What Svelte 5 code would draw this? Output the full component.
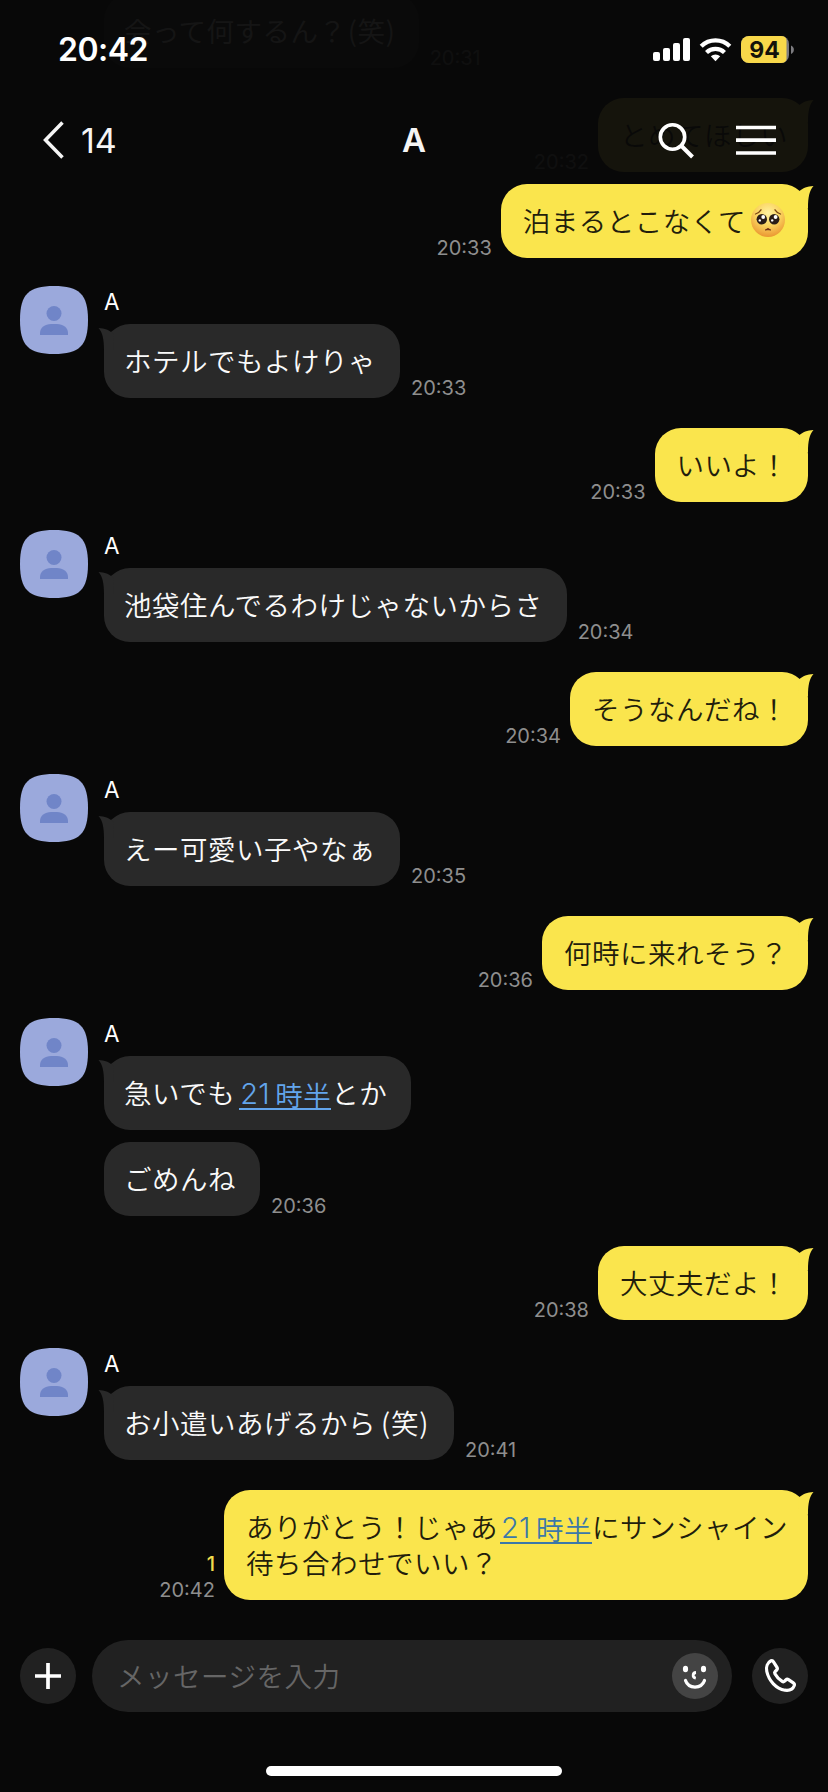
<script>
  const messages = [
    { from: 'them', cont: true, time: '20:31', lines: [[{ t: '会って何するん？' }, { t: '(笑)', kind: 'laugh tight' }]] },
    { from: 'me', time: '20:32', lines: [[{ t: 'とめてほしい' }]] },
    { from: 'me', cont: true, tail: true, time: '20:33', lines: [[{ t: '泊まるとこなくて' }, { kind: 'emoji' }]] },
    { from: 'them', time: '20:33', lines: [[{ t: 'ホテルでもよけりゃ' }]] },
    { from: 'me', time: '20:33', lines: [[{ t: 'いいよ！' }]] },
    { from: 'them', time: '20:34', lines: [[{ t: '池袋住んでるわけじゃないからさ' }]] },
    { from: 'me', time: '20:34', lines: [[{ t: 'そうなんだね！' }]] },
    { from: 'them', time: '20:35', lines: [[{ t: 'えー可愛い子やなぁ' }]] },
    { from: 'me', time: '20:36', lines: [[{ t: '何時に来れそう？' }]] },
    { from: 'them', lines: [[{ t: '急いでも' }, { n: '21', t: '時半', kind: 'link' }, { t: 'とか' }]] },
    { from: 'them', cont: true, time: '20:36', lines: [[{ t: 'ごめんね' }]] },
    { from: 'me', time: '20:38', lines: [[{ t: '大丈夫だよ！' }]] },
    { from: 'them', time: '20:41', lines: [[{ t: 'お小遣いあげるから' }, { t: '(笑)', kind: 'laugh' }]] },
    {
      from: 'me', time: '20:42', read: '1',
      lines: [
        [{ t: 'ありがとう！じゃあ' }, { n: '21', t: '時半', kind: 'link' }, { t: 'にサンシャイン' }],
        [{ t: '待ち合わせでいい？' }]
      ]
    }
  ];
</script>

{#snippet emoji()}
  <svg class="emoji" viewBox="0 0 34 34" role="img" aria-label="🥺">
    <defs>
      <radialGradient id="face" cx=".5" cy=".3" r=".72">
        <stop offset="0" stop-color="#fff1a0" />
        <stop offset=".5" stop-color="#fbd45f" />
        <stop offset="1" stop-color="#e9932f" />
      </radialGradient>
    </defs>
    <circle cx="17" cy="17" r="17" fill="url(#face)" />
    <circle cx="10.8" cy="16.2" r="5.2" fill="#2a1d18" />
    <circle cx="23.2" cy="16.2" r="5.2" fill="#2a1d18" />
    <circle cx="12.2" cy="14" r="1.9" fill="#fff" />
    <circle cx="24.6" cy="14" r="1.9" fill="#fff" />
    <circle cx="8.8" cy="17.4" r="1.2" fill="#fff" />
    <circle cx="21.2" cy="17.4" r="1.2" fill="#fff" />
    <path d="M4.5 11 Q8 10 10 6.8 M29.5 11 Q26 10 24 6.8" fill="none" stroke="#7a4514" stroke-width="1.3" stroke-linecap="round" />
    <path d="M14.3 27 Q17 24 19.7 27 Q17 26.4 14.3 27Z" fill="#6b2a12" stroke="#6b2a12" stroke-width=".9" />
  </svg>
{/snippet}

<div class="screen">
  <div class="chat">
    {#each messages as m}
      <div class="row {m.from}" class:cont={m.cont}>
        {#if m.from === 'them'}
          <div class="side">
            {#if !m.cont}
              <svg class="avatar" viewBox="0 0 68 68">
                <path d="M0 34C0 8.5 8.5 0 34 0S68 8.5 68 34 59.500 68 34 68 0 59.500 0 34Z" fill="#9ba9dc" />
                <circle cx="34" cy="27.500" r="7.500" fill="#7085c8" />
                <path d="M20 49V47C20 41.500 25 38 31 38H37C43 38 48 41.500 48 47V49Z" fill="#7085c8" />
              </svg>
            {/if}
          </div>
        {/if}
        <div class="body">
          {#if m.from === 'them' && !m.cont}<div class="name">A</div>{/if}
          <div class="line">
            <div class="bubble">
              {#if !m.cont || m.tail}
                <svg class="tail" viewBox="0 0 20 24">
                  <path d="M5 7.500C9 4 13 2.300 19.500 2C15.500 6.500 14 13 14 24H4Z" />
                </svg>
              {/if}
              {#each m.lines as line}
                <div class="text">{#each line as part}{#if part.kind === 'emoji'}{@render emoji()}{:else}<span class={part.kind}>{#if part.n}<span class="num">{part.n}</span>{/if}{part.t}</span>{/if}{/each}</div>
              {/each}
            </div>
            {#if m.time}
              <div class="meta">
                {#if m.read}<span class="read">{m.read}</span>{/if}
                <span>{m.time}</span>
              </div>
            {/if}
          </div>
        </div>
      </div>
    {/each}
  </div>

  <footer>
    <div class="composer">
      <div class="round">
        <svg width="56" height="56" viewBox="0 0 56 56"><path d="M28 15V41M15 28H41" stroke="#fff" stroke-width="3.700" /></svg>
      </div>
      <div class="field">
        <span>メッセージを入力</span>
        <svg width="46" height="46" viewBox="0 0 46 46">
          <circle cx="23" cy="23" r="23" fill="#444" />
          <ellipse cx="13.500" cy="16" rx="2.600" ry="3.300" fill="#fff" />
          <ellipse cx="31.500" cy="16" rx="2.600" ry="3.300" fill="#fff" />
          <path d="M24 19.500C20.500 19.700 20 24.500 23.800 25.200" fill="none" stroke="#fff" stroke-width="2.800" />
          <path d="M13.500 27.500C16.500 36.200 29.500 36.200 32.500 27.500" fill="none" stroke="#fff" stroke-width="3.200" stroke-linecap="round" />
        </svg>
      </div>
      <div class="round">
        <svg width="56" height="56" viewBox="0 0 56 56">
          <path d="M19 12.800C15.500 14.500 13.800 19 14.800 23.500C17 33 24 40.500 33 42.200C37.500 42.800 41 41 42.300 37.500C42.700 36.300 42.200 35.500 41.300 34.900L36.500 31.600C35.500 31 34.600 31.200 33.800 32L32.600 33.200C31.900 33.900 31 33.900 30.200 33.400C27 31.400 24.500 28.800 22.900 25.800C22.400 24.900 22.500 24.200 23.200 23.500L24.700 22C25.500 21.200 25.600 20.400 25 19.400L21.500 13.800C20.900 12.800 20.100 12.300 19 12.800Z" fill="none" stroke="#fff" stroke-width="3.200" stroke-linejoin="round" />
        </svg>
      </div>
    </div>
    <div class="home"></div>
  </footer>

  <header>
    <div class="status">
      <span class="clock">20:42</span>
      <svg width="142" height="28" viewBox="0 0 142 28">
        <g fill="#fff">
          <rect x="0" y="16" width="7" height="9" rx="2" />
          <rect x="10" y="12" width="7" height="13" rx="2" />
          <rect x="20" y="7" width="7" height="18" rx="2" />
          <rect x="30" y="2" width="7" height="23" rx="2" />
          <path d="M62.500 25.200L57.800 20.300A7 7 0 0 1 67.200 20.300Z" />
        </g>
        <path d="M53.500 16.500A13 13 0 0 1 71.500 16.500M48.200 10.200A20.500 20.500 0 0 1 76.800 10.200" fill="none" stroke="#fff" stroke-width="4.300" />
        <path d="M96 0H128A8 8 0 0 1 136 8V19A8 8 0 0 1 128 27H96A8 8 0 0 1 88 19V8A8 8 0 0 1 96 0Z" fill="#7d7c80" />
        <path d="M96 0H128Q133 0 133.500 4V23Q133 27 128 27H96A8 8 0 0 1 88 19V8A8 8 0 0 1 96 0Z" fill="#f8d84a" />
        <path d="M138 9.500A4.600 4.600 0 0 1 138 18Z" fill="#7d7c80" />
        <text x="111.500" y="22" text-anchor="middle" class="charge">94</text>
      </svg>
    </div>
    <nav>
      <div class="back">
        <svg width="22" height="38" viewBox="0 0 22 38"><path d="M20.500 1.500L3.500 19L20.500 36.500" fill="none" stroke="#f5f5f5" stroke-width="3.500" /></svg>
        <span>14</span>
      </div>
      <strong>A</strong>
      <div class="tools">
        <svg width="37" height="37" viewBox="0 0 37 37"><circle cx="14.500" cy="15" r="12.200" fill="none" stroke="#fff" stroke-width="3.600" /><path d="M23 23.500L34.500 35" stroke="#fff" stroke-width="4" /></svg>
        <svg width="40" height="32" viewBox="0 0 40 32"><path d="M0 3.500H40M0 16.200H40M0 29H40" stroke="#fff" stroke-width="3.700" /></svg>
      </div>
    </nav>
  </header>
</div>

<style>
  :global(body) { background: #080808; }
  .screen {
    position: relative;
    width: 828px;
    height: 1792px;
    overflow: hidden;
    display: flex;
    flex-direction: column;
    justify-content: space-between;
    background: #080808;
    color: #fff;
    font-family: Inter, "Noto Sans CJK JP", sans-serif;
  }
  .chat { display: flex; flex-direction: column; padding: 0 20px; margin-top: -6px; }
  .row { display: flex; }
  .row.them { margin-top: 28px; }
  .row.me { margin-top: 30px; justify-content: flex-end; }
  .row.cont { margin-top: 12px; }
  .row:first-child { margin-top: 0; }
  .side { width: 84px; flex: none; }
  .avatar { display: block; width: 68px; height: 68px; }
  .name { height: 38px; line-height: 32px; font-size: 22.500px; box-sizing: border-box; }
  .line { display: flex; align-items: flex-end; gap: 11px; }
  .me .line { flex-direction: row-reverse; gap: 9px; }
  .bubble {
    position: relative;
    background: #292929;
    border-radius: 26px;
    padding: 18px 24px 20px 20px;
    font-family: "Noto Sans CJK JP", sans-serif;
    font-weight: 350;
    font-size: 27.500px;
    letter-spacing: .5px;
    color: #fafafa;
  }
  .me .bubble { background: #fae54d; color: #221d0c; padding: 18px 20px 20px 22px; }
  .text { height: 36px; line-height: 36px; white-space: nowrap; display: flex; align-items: center; }
  .tail { position: absolute; top: 0; right: -6px; width: 20px; height: 24px; fill: #fae54d; }
  .them .tail { right: auto; left: -6px; top: 2px; fill: #292929; transform: scaleX(-1); }
  .link {
    box-sizing: border-box;
    width: 92px;
    height: 34px;
    line-height: 36px;
    margin: 0 0 -2px 4px;
    color: #63a5ec;
    border-bottom: 2px solid #63a5ec;
    display: flex;
  }
  .num { font-family: Inter, sans-serif; font-size: 29px; letter-spacing: .3px; width: 36px; padding-left: 1px; box-sizing: border-box; flex: none; }
  .me .link { color: #3c78a8; border-color: #3c78a8; margin-left: 2px; }
  .laugh { width: 54px; box-sizing: border-box; padding-left: 5px; letter-spacing: .8px; }
  .laugh.tight { width: 48px; padding-left: 1px; }
  .emoji { width: 34px; height: 34px; margin: 0 3px 0 5px; }
  .meta { display: flex; flex-direction: column; align-items: flex-end; font-size: 20px; line-height: 26px; color: #8e8e8e; margin-bottom: -3px; }
  .read { color: #f0dc4c; font-weight: 500; }

  footer { display: flex; flex-direction: column; align-items: center; gap: 54px; padding-bottom: 16px; }
  .composer { width: 788px; display: flex; align-items: center; }
  .round { width: 56px; height: 56px; border-radius: 50%; background: #212121; flex: none; }
  .round svg { display: block; }
  .field {
    flex: 1;
    height: 72px;
    margin: 0 20px 0 16px;
    padding: 0 14px 0 25px;
    box-sizing: border-box;
    border-radius: 36px;
    background: #212121;
    display: flex;
    align-items: center;
    justify-content: space-between;
    font: 350 27.500px/36px "Noto Sans CJK JP", sans-serif;
    letter-spacing: .5px;
    color: #666;
  }
  .field span { margin-bottom: 2px; }
  .home { width: 296px; height: 10px; border-radius: 5px; background: #fff; }

  header { position: absolute; inset: 0 0 auto 0; height: 180px; background: rgba(8, 8, 8, .95); }
  .status { height: 100px; box-sizing: border-box; padding: 36px 33px 0 58px; display: flex; justify-content: space-between; align-items: flex-start; }
  .clock { font-size: 32px; line-height: 28px; font-weight: 600; letter-spacing: -.5px; }
  .charge { font: 700 23px Inter, sans-serif; fill: #14120a; }
  nav { height: 80px; display: grid; grid-template-columns: 1fr auto 1fr; align-items: center; padding: 0 52px; }
  .back { display: flex; align-items: center; gap: 17px; margin-left: -10px; font-size: 34px; color: #f5f5f5; }
  nav strong { font-size: 33px; font-weight: 600; color: #f5f5f5; }
  .tools { display: flex; justify-content: flex-end; align-items: center; gap: 41px; }
</style>
